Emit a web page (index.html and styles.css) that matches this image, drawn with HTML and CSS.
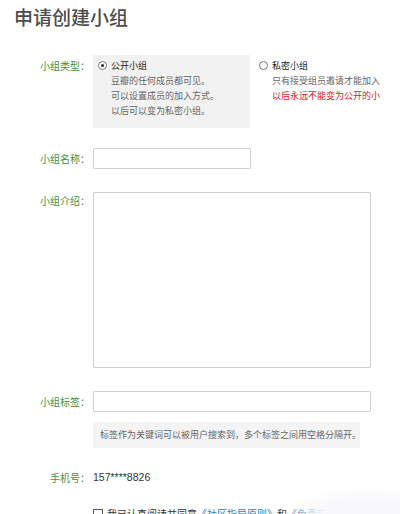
FILE: index.html
```html
<!DOCTYPE html>
<html lang="zh-CN">
<head>
    <meta charset="UTF-8">
    <meta name="viewport" content="width=device-width, initial-scale=1.0">
    <title>申请创建小组</title>
    <link rel="stylesheet" href="styles.css">
</head>
<body>

    <h1>申请创建小组</h1>

    <div class="row row-type">
        <div class="label">小组类型：</div>
        <div class="types">
            <div class="opt opt-public">
                <span class="radio checked"></span>
                <div class="opt-text">
                    <div class="opt-title">公开小组</div>
                    <div>豆瓣的任何成员都可见。</div>
                    <div>可以设置成员的加入方式。</div>
                    <div>以后可以变为私密小组。</div>
                </div>
            </div>
            <div class="opt opt-private">
                <span class="radio"></span>
                <div class="opt-text">
                    <div class="opt-title">私密小组</div>
                    <div>只有接受组员邀请才能加入</div>
                    <div class="warn">以后永远不能变为公开的小组</div>
                </div>
            </div>
        </div>
    </div>

    <div class="row row-name">
        <div class="label">小组名称：</div>
        <input type="text" class="input input-short">
    </div>

    <div class="row row-intro">
        <div class="label">小组介绍：</div>
        <textarea class="textarea"></textarea>
    </div>

    <div class="row row-tags">
        <div class="label">小组标签：</div>
        <input type="text" class="input input-long">
    </div>

    <div class="row row-hint">
        <div class="label"></div>
        <div class="hint">标签作为关键词可以被用户搜索到，多个标签之间用空格分隔开。</div>
    </div>

    <div class="row row-phone">
        <div class="label">手机号：</div>
        <div class="phone">157****8826</div>
    </div>

    <div class="row row-agree">
        <div class="label"></div>
        <div class="agree"><span class="box"></span>我已认真阅读并同意<a href="#">《社区指导原则》</a>和<a href="#">《免责声明》</a></div>
    </div>

    <div class="fade"></div>

</body>
</html>
```

FILE: styles.css
```css
body {
    margin: 0;
    font-family: "Noto Sans CJK SC", "Liberation Sans", sans-serif;
    color: #666;
    background: #fff;
    position: relative;
    height: 514px;
    overflow: hidden;
}
h1 {
    margin: 0;
    padding: 6px 0 0 14px;
    height: 29px;
    box-sizing: border-box;
    font-size: 19px;
    line-height: 21px;
    font-weight: 500;
    color: #4d4d4d;
}
.row {
    display: flex;
    margin-top: 23px;
}
.label {
    width: 90px;
    flex-shrink: 0;
    text-align: right;
    font-size: 10px;
    line-height: 15px;
    color: #3f923f;
    margin-right: 3px;
}
.row-type {
    margin-top: 26px;
}
.row-type .label {
    padding-top: 3px;
}
.types {
    display: flex;
    gap: 4px;
}
.opt {
    display: flex;
    align-items: flex-start;
    padding: 3px 5px 10px 5px;
    font-size: 9px;
    line-height: 15px;
    box-sizing: border-box;
}
.opt-public {
    width: 157px;
    height: 73px;
    background: #f2f2f2;
}
.opt-private {
    width: 126px;
    overflow: hidden;
    white-space: nowrap;
}
.radio {
    width: 7px;
    height: 7px;
    border: 1px solid #777;
    border-radius: 50%;
    margin: 3px 4px 0 0;
    flex-shrink: 0;
    position: relative;
    background: #fff;
}
.radio.checked::after {
    content: "";
    position: absolute;
    left: 2px;
    top: 2px;
    width: 3px;
    height: 3px;
    border-radius: 50%;
    background: #222;
}
.opt-title {
    color: #222;
}
.warn {
    color: #e0202a;
}
.row-name {
    margin-top: 20px;
    align-items: center;
}
.input {
    height: 21px;
    box-sizing: border-box;
    border: 1px solid #cfcfcf;
    border-radius: 2px;
    padding: 0 4px;
    margin: 0;
    background: #fff;
}
.input-short {
    width: 158px;
}
.input-long {
    width: 278px;
}
.row-intro .label {
    padding-top: 1px;
}
.textarea {
    width: 278px;
    height: 176px;
    box-sizing: border-box;
    border: 1px solid #cfcfcf;
    border-radius: 2px;
    margin: 0;
    padding: 4px;
    resize: none;
}
.row-tags {
    align-items: center;
}
.row-hint {
    margin-top: 10px;
}
.hint {
    width: 267px;
    height: 26px;
    box-sizing: border-box;
    background: #f4f4f4;
    padding-left: 7px;
    font-size: 9px;
    line-height: 26px;
    white-space: nowrap;
}
.row-phone {
    margin-top: 22px;
}
.phone {
    font-family: "Liberation Sans", Arial, sans-serif;
    font-size: 10.5px;
    line-height: 15px;
    color: #333;
}
.row-agree {
    margin-top: 21px;
}
.agree {
    font-size: 10px;
    line-height: 15px;
    color: #333;
    white-space: nowrap;
    display: flex;
    align-items: center;
}
.agree a {
    color: #3377aa;
    text-decoration: none;
}
.box {
    width: 8px;
    height: 8px;
    border: 1px solid #555;
    margin-right: 4px;
}
.fade {
    position: absolute;
    left: 280px;
    top: 486px;
    width: 150px;
    height: 50px;
    background: radial-gradient(ellipse at 60% 70%, rgba(248, 248, 252, 1) 40%, rgba(255, 255, 255, 0) 72%);
}
```
